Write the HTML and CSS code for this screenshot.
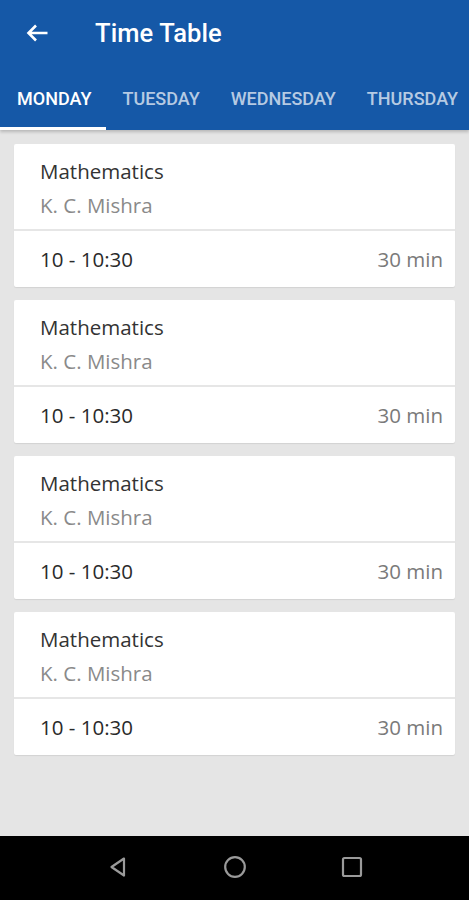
FILE: index.html
```html
<!DOCTYPE html>
<html lang="en">
<head>
    <meta charset="UTF-8">
    <meta name="viewport" content="width=device-width, initial-scale=1.0">
    <title>Time Table</title>
    <link rel="stylesheet" href="styles.css">
</head>
<body>
    <div class="appbar">
        <div class="toolbar">
            <svg class="back" width="24" height="20" viewBox="0 0 24 20">
                <path d="M22.5 10H3.5M11 2.5L3.5 10L11 17.5" fill="none" stroke="#fff" stroke-width="2.6"/>
            </svg>
            <h1>Time Table</h1>
        </div>
        <div class="tabs">
            <div class="tab active">MONDAY</div>
            <div class="tab">TUESDAY</div>
            <div class="tab">WEDNESDAY</div>
            <div class="tab">THURSDAY</div>
        </div>
    </div>

    <div class="list">
        <div class="card">
            <div class="card-top">
                <div class="subject">Mathematics</div>
                <div class="teacher">K. C. Mishra</div>
            </div>
            <div class="card-bottom">
                <span class="time">10 - 10:30</span>
                <span class="duration">30 min</span>
            </div>
        </div>
        <div class="card">
            <div class="card-top">
                <div class="subject">Mathematics</div>
                <div class="teacher">K. C. Mishra</div>
            </div>
            <div class="card-bottom">
                <span class="time">10 - 10:30</span>
                <span class="duration">30 min</span>
            </div>
        </div>
        <div class="card">
            <div class="card-top">
                <div class="subject">Mathematics</div>
                <div class="teacher">K. C. Mishra</div>
            </div>
            <div class="card-bottom">
                <span class="time">10 - 10:30</span>
                <span class="duration">30 min</span>
            </div>
        </div>
        <div class="card">
            <div class="card-top">
                <div class="subject">Mathematics</div>
                <div class="teacher">K. C. Mishra</div>
            </div>
            <div class="card-bottom">
                <span class="time">10 - 10:30</span>
                <span class="duration">30 min</span>
            </div>
        </div>
    </div>

    <div class="navbar">
        <svg width="24" height="24" viewBox="0 0 24 24">
            <path d="M18 3.5 L5.5 12 L18 20.5 Z" fill="none" stroke="#9a9a9a" stroke-width="2.2" stroke-linejoin="round"/>
        </svg>
        <svg width="24" height="24" viewBox="0 0 24 24">
            <circle cx="12" cy="12" r="9.8" fill="none" stroke="#9a9a9a" stroke-width="2.2"/>
        </svg>
        <svg width="24" height="24" viewBox="0 0 24 24">
            <rect x="3" y="3" width="18" height="18" rx="1.5" fill="none" stroke="#9a9a9a" stroke-width="2.2"/>
        </svg>
    </div>
</body>
</html>
```

FILE: styles.css
```css
html, body {
    margin: 0;
    padding: 0;
}
body {
    width: 469px;
    height: 900px;
    background: #e5e5e5;
    font-family: 'Open Sans', sans-serif;
    display: flex;
    flex-direction: column;
    overflow: hidden;
}
.appbar {
    background: #1558a7;
    color: white;
    height: 130px;
    box-shadow: 0 2px 3px rgba(0,0,0,0.2);
}
.toolbar {
    height: 66px;
    display: flex;
    align-items: center;
}
.back {
    margin-left: 25px;
    margin-right: 46px;
}
.toolbar h1 {
    margin: 0;
    font-family: Roboto, sans-serif;
    font-weight: 500;
    font-size: 25.5px;
    letter-spacing: 0.1px;
}
.tabs {
    display: flex;
    height: 64px;
    white-space: nowrap;
}
.tab {
    font-family: Roboto, sans-serif;
    font-weight: 500;
    font-size: 18px;
    color: rgba(255,255,255,0.7);
    display: flex;
    align-items: center;
    padding: 4px 15px 0 16px;
    box-sizing: border-box;
    border-bottom: 3px solid transparent;
}
.tab.active {
    color: white;
    border-bottom-color: white;
    padding-left: 17px;
    width: 107px;
}
.list {
    flex: 1;
    padding: 14px 14px 0 14px;
    display: flex;
    flex-direction: column;
    gap: 13px;
}
.card {
    background: white;
    height: 143px;
    display: flex;
    flex-direction: column;
    border-radius: 2px;
    box-shadow: 0 1px 1px rgba(0,0,0,0.08);
}
.card-top {
    height: 87px;
    padding: 13px 26px 0 26px;
    box-sizing: border-box;
    border-bottom: 2px solid #e6e6e6;
}
.subject {
    font-size: 20.5px;
    color: #333;
    line-height: 28px;
}
.teacher {
    font-size: 20.5px;
    color: #8a8a8a;
    line-height: 28px;
    margin-top: 6px;
}
.card-bottom {
    flex: 1;
    display: flex;
    align-items: center;
    justify-content: space-between;
    padding: 0 12px 0 26px;
    font-size: 20.5px;
}
.time {
    color: #2a2a2a;
}
.duration {
    color: #7a7a7a;
}
.navbar {
    height: 62px;
    background: #000;
    display: flex;
    align-items: center;
    justify-content: center;
    gap: 93px;
    padding-bottom: 2px;
}
```
